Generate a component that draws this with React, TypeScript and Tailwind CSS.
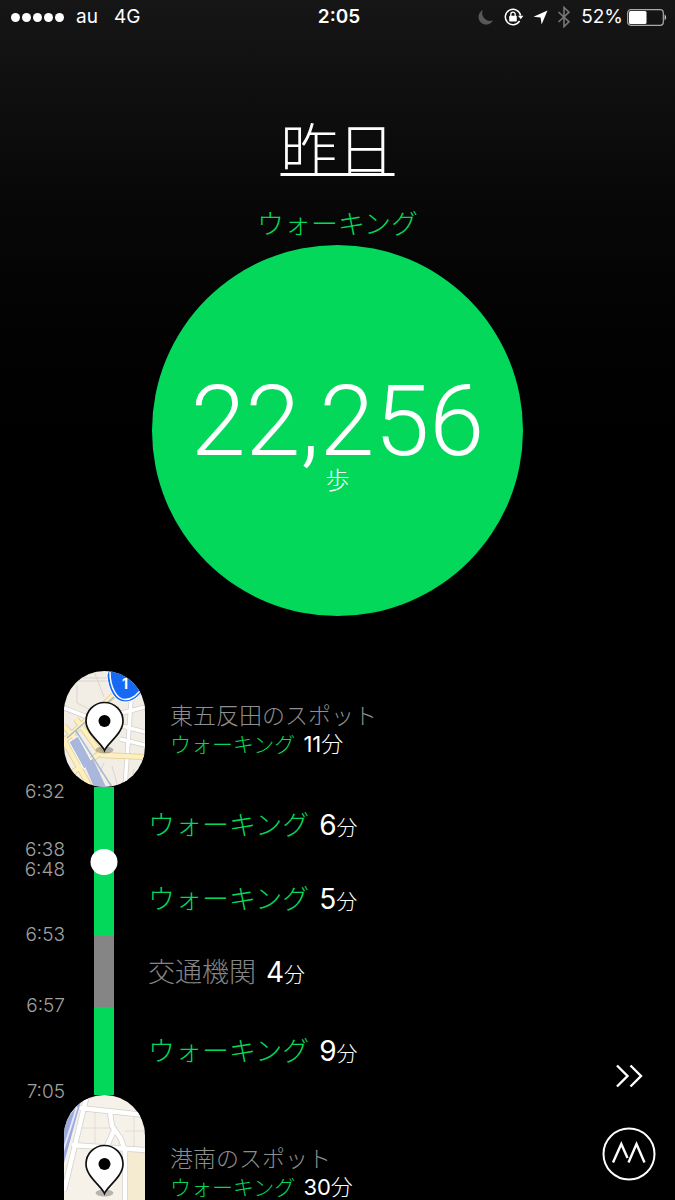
import React from "react";

type Edge = "spot" | "stop" | "change";

interface Segment {
  activity: string;
  minutes: number;
  kind: "walk" | "transport";
  height: string;
  start: string;
  startEdge: Edge;
  end?: string;
  endEdge?: Edge;
}

const segments: Segment[] = [
  {
    activity: "ウォーキング",
    minutes: 6,
    kind: "walk",
    height: "h-[75px]",
    start: "6:32",
    startEdge: "spot",
    end: "6:38",
    endEdge: "stop",
  },
  {
    activity: "ウォーキング",
    minutes: 5,
    kind: "walk",
    height: "h-[74px]",
    start: "6:48",
    startEdge: "stop",
  },
  {
    activity: "交通機関",
    minutes: 4,
    kind: "transport",
    height: "h-[71px]",
    start: "6:53",
    startEdge: "change",
  },
  {
    activity: "ウォーキング",
    minutes: 9,
    kind: "walk",
    height: "h-[88px]",
    start: "6:57",
    startEdge: "change",
    end: "7:05",
    endEdge: "spot",
  },
];

const edgeMargin: Record<Edge, string> = {
  spot: "-mt-[3px] -mb-[9px]",
  stop: "my-0",
  change: "-my-[9px]",
};

const StatusBar = () => {
  return (
    <header className="grid grid-cols-[1fr_auto_1fr] items-center shrink-0 h-[34px] pl-[11px] pr-[8px] text-[19px] leading-[24px]">
      <div className="flex items-center">
        <div className="flex gap-[2px]">
          {[1, 2, 3, 4, 5].map((dot) => (
            <span key={dot} className="size-[9px] rounded-full bg-white" />
          ))}
        </div>
        <span className="ml-[12px]">au</span>
        <span className="ml-[16px]">4G</span>
      </div>
      <span className="font-semibold">2:05</span>
      <div className="flex items-center justify-end">
        <svg width="16" height="16" viewBox="0 0 16 16" className="mr-[10px]">
          <path d="M5 1A7.6 7.6 0 1 0 15 11.2 7.6 7.6 0 0 1 5 1Z" fill="#58585a" />
        </svg>
        <svg width="20" height="18" viewBox="0 0 20 18" className="mr-[9px]">
          <path
            d="M16.600 7.500A7.700 7.700 0 1 0 15.600 13"
            fill="none"
            stroke="#fff"
            strokeWidth="1.500"
          />
          <path d="M14 7.800h5.400l-2.700 3.400z" fill="#fff" />
          <rect x="5.200" y="7.800" width="7.600" height="5.600" rx=".6" fill="#fff" />
          <path d="M6.800 8V6.300a2.200 2.200 0 0 1 4.400 0V8" fill="none" stroke="#fff" strokeWidth="1.300" />
        </svg>
        <svg width="15" height="15" viewBox="0 0 15 15" className="mr-[9px]">
          <path d="M14.500.5 8.600 14.500 7.600 7.500.5 6.700Z" fill="#fff" />
        </svg>
        <svg width="14" height="22" viewBox="0 0 14 22" className="mr-[10px]">
          <path
            d="M1.500 6 12 15.800 7 20.600V1.400l5 4.800L1.500 16"
            fill="none"
            stroke="#77777a"
            strokeWidth="1.600"
          />
        </svg>
        <span>52%</span>
        <svg width="40" height="17" viewBox="0 0 40 17" className="ml-[4px]">
          <rect x=".7" y=".7" width="35.600" height="15.600" rx="3" fill="none" stroke="#aaa" strokeWidth="1.200" />
          <rect x="2" y="2" width="17.500" height="13" rx="1.500" fill="#fff" />
          <path d="M37.600 5.600c2 1 2 4.800 0 5.800z" fill="#ccc" />
        </svg>
      </div>
    </header>
  );
};

const Pin = ({ y }: { y: number }) => {
  return (
    <g transform={`translate(40.500 ${y})`}>
      <ellipse cx="0" cy="29" rx="9" ry="3.500" fill="#000" opacity=".25" />
      <path
        d="M0 29.500C-3 22-18.500 12.500-18.500 0a18.500 18.500 0 0 1 37 0C18.500 12.500 3 22 0 29.500Z"
        fill="#fff"
        stroke="#111"
        strokeWidth="1.700"
      />
      <circle r="6" fill="#000" />
    </g>
  );
};

const GotandaMap = () => {
  return (
    <svg viewBox="0 0 81 116" className="w-full h-full">
      <rect width="81" height="116" fill="#f2eee6" />
      <g fill="none" stroke="#d9d5cf" strokeWidth="1">
        <path d="M13 14v18l12 6M4 7h42M6 10h38M30 0l10 26M48 95l6 21M70 98l-4 18M40 92l-6 14" />
      </g>
      <g fill="none" stroke="#d3cfca" strokeWidth="5">
        <path d="M0 37l26 10 32 8 23 6M67 30l-6 86M56 68l25 6M58 42l23-6" />
      </g>
      <g fill="none" stroke="#fff" strokeWidth="3.500">
        <path d="M0 37l26 10 32 8 23 6M67 30l-6 86M56 68l25 6M58 42l23-6" />
      </g>
      <g fill="none" stroke="#e9c98f" strokeWidth="6">
        <path d="M-2 72 50 24M12 48l26 36 43 2M-2 66l27 48M2 106l36-25M0 55l12 13" />
      </g>
      <g fill="none" stroke="#faf0c0" strokeWidth="4.500">
        <path d="M-2 72 50 24M12 48l26 36 43 2M-2 66l27 48M2 106l36-25M0 55l12 13" />
      </g>
      <path d="M5 71l9-6 14 26-8 7z" fill="#a9b7dc" stroke="#fff" />
      <path d="M20 93l9-5 13 28H30z" fill="#a9b7dc" />
      <path d="M3 67 50 26M12 60l36 56" fill="none" stroke="#a4b8cf" strokeWidth="1.500" />
      {/* route shield */}
      <path d="M43 4C44 19 51 31 61 31c8 0 13-5 19-12V-2H45Z" fill="#1769f5" stroke="#fff" strokeWidth="1" />
      <path
        d="M46 1C46 17 53 28.500 61 28.500c7 0 11-4 17-11"
        fill="none"
        stroke="#fff"
        strokeWidth="1.500"
      />
      <text x="61" y="18" textAnchor="middle" fontSize="14" fontWeight="700" fill="#fff">
        1
      </text>
      <Pin y={50} />
    </svg>
  );
};

const KonanMap = () => {
  return (
    <svg viewBox="0 0 81 154" className="w-full h-full">
      <rect width="81" height="154" fill="#f6f2ea" />
      <path d="M64 56h17v98H64z" fill="#f5ebd0" />
      <path d="M17 6 0 68V28Z" fill="#9ba9de" />
      <path d="M13 12-4 66" stroke="#e4e7f5" strokeWidth="2" />
      <path d="M31 14v34M61 36h20M70 20v34M14 33h34" fill="none" stroke="#e2ddd5" strokeWidth="1" />
      <g fill="none" stroke="#d3d0cc" strokeWidth="6">
        <path d="M22 4 0 96M16 13l65 7M8 50l73 5M46 17l2 14 9 13 4 12v98M51 33l-8 18" />
      </g>
      <g fill="none" stroke="#fff" strokeWidth="4.500">
        <path d="M22 4 0 96M16 13l65 7M8 50l73 5M46 17l2 14 9 13 4 12v98M51 33l-8 18" />
      </g>
      <Pin y={69} />
    </svg>
  );
};

interface SpotProps {
  name: string;
  minutes: number;
  height: string;
  children: React.ReactNode;
}

const Spot = ({ name, minutes, height, children }: SpotProps) => {
  return (
    <li className={`flex items-center shrink-0 pl-[64px] ${height}`}>
      <div className="w-[81px] h-full shrink-0 rounded-full overflow-hidden">{children}</div>
      <div className="ml-[25px] pt-[2px] font-light">
        <p className="text-[23px] leading-[28px] text-[#8e8e8e]">{name}</p>
        <p className="flex items-baseline gap-[8px] leading-[28px]">
          <span className="text-[21px] text-[#04d85b]">ウォーキング</span>
          <span className="text-[22px] font-normal">
            {minutes}
            <span className="font-light">分</span>
          </span>
        </p>
      </div>
    </li>
  );
};

const SegmentRow = ({ segment }: { segment: Segment }) => {
  const walking = segment.kind === "walk";
  return (
    <li className={`flex items-center shrink-0 ${segment.height}`}>
      <div className="flex flex-col justify-between w-[65px] h-full pb-[2px] -mt-[2px] text-right text-[19px] leading-[18px] text-[#a0a0a0] font-light">
        <time className={edgeMargin[segment.startEdge]}>{segment.start}</time>
        {segment.end && (
          <time className={edgeMargin[segment.endEdge ?? "change"]}>{segment.end}</time>
        )}
      </div>
      <div className={`relative w-[20px] h-full ml-[29px] ${walking ? "bg-[#04d85b]" : "bg-[#858585]"}`}>
        {segment.endEdge === "stop" && (
          <span className="absolute z-10 left-1/2 top-full w-[27px] h-[26px] -translate-1/2 rounded-full bg-white" />
        )}
      </div>
      <p className="flex items-baseline gap-[10px] ml-[34px] pt-[3px] leading-[36px] font-light">
        <span className={`text-[27px] ${walking ? "text-[#04d85b]" : "text-[#858585]"}`}>
          {segment.activity}
        </span>
        <span className="text-[28px] font-normal">
          {segment.minutes}
          <span className="text-[21px] font-light">分</span>
        </span>
      </p>
    </li>
  );
};

const App = () => {
  return (
    <div className="relative flex flex-col h-screen overflow-hidden bg-black bg-linear-to-b from-[#161616] to-black to-50% text-white font-['Inter','Noto_Sans_CJK_JP',sans-serif]">
      <StatusBar />
      <main className="flex flex-col" lang="ja">
        <section className="flex flex-col items-center pt-[81px]">
          <button
            type="button"
            className="text-[57px] leading-[72px] font-light underline decoration-[3px] underline-offset-[2px]"
          >
            昨日
          </button>
          <h2 className="mt-[18px] text-[27px] leading-[40px] font-light text-[#04d85b]">ウォーキング</h2>
          <div className="flex flex-col items-center justify-center size-[371px] pt-[4px] rounded-full bg-[#04d85b]">
            <p className="font-['Roboto',sans-serif] text-[99px] leading-[96px] font-light">22,256</p>
            <p className="text-[24px] leading-[24px] font-light">歩</p>
          </div>
        </section>
        <ol className="flex flex-col mt-[55px]">
          <Spot name="東五反田のスポット" minutes={11} height="h-[116px]">
            <GotandaMap />
          </Spot>
          {segments.map((segment) => (
            <SegmentRow key={segment.start} segment={segment} />
          ))}
          <Spot name="港南のスポット" minutes={30} height="h-[154px]">
            <KonanMap />
          </Spot>
        </ol>
      </main>
      <nav className="absolute right-[19px] bottom-[19px] flex flex-col items-center gap-[39px]">
        <button type="button" aria-label="次の日">
          <svg width="28" height="24" viewBox="0 0 28 24" fill="none" stroke="#fff" strokeWidth="2.400">
            <path d="M2 1.500 12.500 12 2 22.500M15.500 1.500 26 12 15.500 22.500" />
          </svg>
        </button>
        <button type="button" aria-label="メニュー">
          <svg width="54" height="54" viewBox="0 0 54 54" fill="none" stroke="#fff">
            <circle cx="27" cy="27" r="25.500" strokeWidth="2" />
            <path d="M11 35.500 19.300 17 25.500 31M26.500 35.500 34.500 17 42.500 35.500" strokeWidth="2.400" />
          </svg>
        </button>
      </nav>
    </div>
  );
};

export default App;
